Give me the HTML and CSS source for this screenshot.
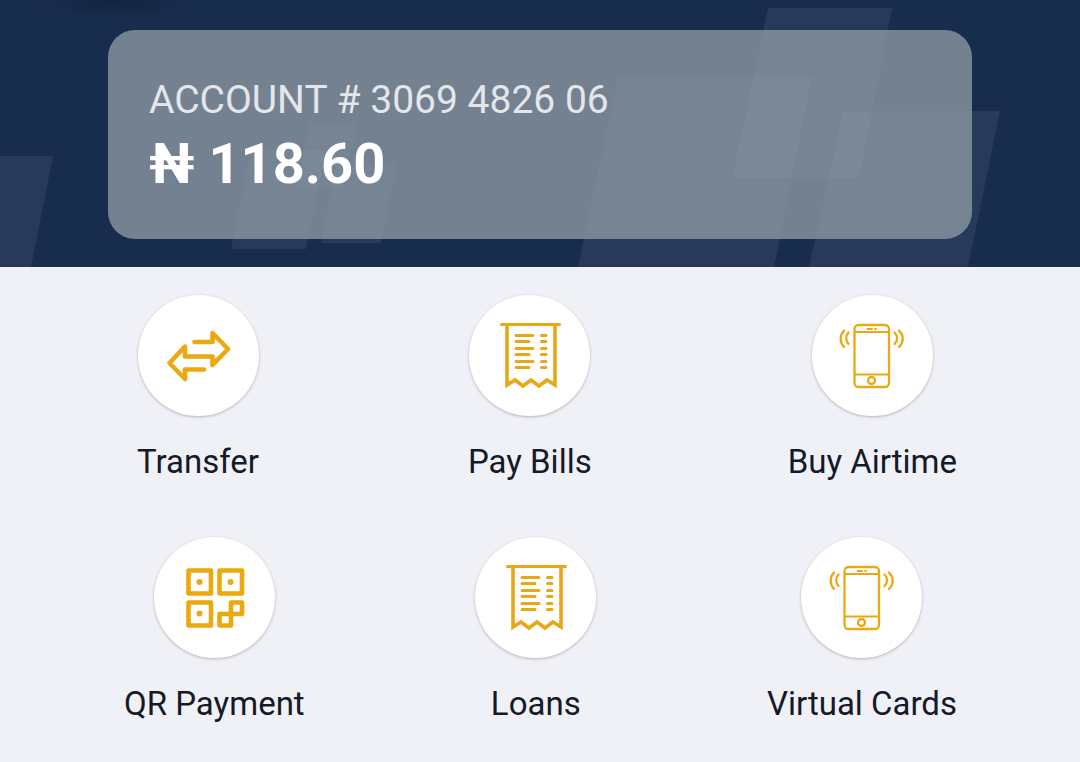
FILE: index.html
```html
<!DOCTYPE html>
<html lang="en">

<head>
    <meta charset="UTF-8">
    <meta name="viewport" content="width=device-width, initial-scale=1.0">
    <title>Account</title>
    <link rel="stylesheet" href="styles.css">
</head>

<body>
    <header class="hero">
        <svg class="hero-shapes" viewBox="0 0 1080 267" preserveAspectRatio="none" aria-hidden="true">
            <polygon points="0,156 53,156 31,267 0,267" />
            <polygon points="310,123 357,123 344,188 297,188" />
            <polygon points="251,150 326,150 306,249 231,249" />
            <polygon points="337,163 397,163 381,243 321,243" />
            <polygon points="618,77 812,77 774,267 578,267" />
            <polygon points="768,8 892,8 859,178 732,178" />
            <polygon points="843,111 1000,111 968,267 809,267" />
        </svg>
        <section class="account-card">
            <p class="account-number">ACCOUNT # 3069 4826 06</p>
            <h1 class="balance">₦ 118.60</h1>
        </section>
    </header>

    <!-- icons used more than once -->
    <svg class="sprite" aria-hidden="true">
        <symbol id="bill" viewBox="0 0 66 68">
            <g fill="none" stroke="#e6a817" stroke-linecap="round">
                <path stroke-width="3" d="M4.500 2.500H62.500" />
                <path stroke-width="3.600" d="M10 3V63L18 58L26 64L34 58L42 64L50 58L58 63V3" />
                <path stroke-width="3" d="M19 13.500H36M19 19.500H32M19 26.500H36M19 32.500H32M19 39.500H36M19 45.500H32M44.500 13.500H49M44.500 19.500H49M44.500 26.500H49M44.500 32.500H49M44.500 39.500H49M44.500 45.500H49" />
            </g>
        </symbol>
        <symbol id="phone" viewBox="0 0 66 68">
            <g fill="none" stroke="#eaa914" stroke-width="2.300" stroke-linecap="round">
                <rect x="15.500" y="3" width="34.500" height="62" rx="4" />
                <path stroke-width="2" d="M16 10H50M16 52.500H50" />
                <path stroke-width="1.800" d="M28.500 7H33M36 7H37" />
                <circle cx="32.500" cy="58.500" r="3.500" />
                <path d="M5 8.500C.5 13.500 .5 20 5 25M9.500 10.500C6.500 14 6.500 18.500 9.500 22M60 8.500C65 13.500 65 20 60 25M55.500 10.500C59 14 59 18.500 55.500 22" />
            </g>
        </symbol>
    </svg>

    <main class="menu">
        <div class="menu-row">
            <button type="button" class="menu-item wide">
                <span class="circle">
                    <svg viewBox="0 0 66 68">
                        <path fill="none" stroke="#e9a90f" stroke-width="4.600" stroke-linecap="round" stroke-linejoin="round" d="M29.500 20H47.500V11L63 27L47.500 43V34.500H20V24.500L4.500 41L20 57V47.500H39" />
                    </svg>
                </span>
                <span class="label">Transfer</span>
            </button>
            <button type="button" class="menu-item">
                <span class="circle"><svg viewBox="0 0 66 68"><use href="#bill" /></svg></span>
                <span class="label">Pay Bills</span>
            </button>
            <button type="button" class="menu-item">
                <span class="circle"><svg viewBox="0 0 66 68"><use href="#phone" /></svg></span>
                <span class="label">Buy Airtime</span>
            </button>
        </div>
        <div class="menu-row">
            <button type="button" class="menu-item">
                <span class="circle">
                    <svg viewBox="0 0 66 68">
                        <g fill="none" stroke="#e9a90f" stroke-width="4.600" stroke-linejoin="round">
                            <rect x="7.500" y="6.500" width="22.500" height="23" />
                            <rect x="38.500" y="6.500" width="22.500" height="23" />
                            <rect x="7.500" y="38.500" width="22.500" height="23" />
                            <rect x="50" y="38.500" width="11" height="11.500" />
                            <rect x="38.500" y="50" width="11.500" height="11.500" />
                        </g>
                        <g fill="#e9a90f">
                            <circle cx="18.500" cy="18" r="3" />
                            <circle cx="49.500" cy="18" r="3" />
                            <circle cx="18.500" cy="49.500" r="3" />
                        </g>
                    </svg>
                </span>
                <span class="label">QR Payment</span>
            </button>
            <button type="button" class="menu-item">
                <span class="circle"><svg viewBox="0 0 66 68"><use href="#bill" /></svg></span>
                <span class="label">Loans</span>
            </button>
            <button type="button" class="menu-item">
                <span class="circle"><svg viewBox="0 0 66 68"><use href="#phone" /></svg></span>
                <span class="label">Virtual Cards</span>
            </button>
        </div>
    </main>
</body>

</html>
```
FILE: styles.css
```css
* {
    box-sizing: border-box;
}

body {
    font-family: Roboto, "Liberation Sans", sans-serif;
    margin: 0;
    background-color: #f0f1f7;
    color: #151a28;
}

.hero {
    position: relative;
    padding: 30px 10% 28px;
    background: radial-gradient(ellipse 76px 18px at 115px 0, #14233f, transparent) #182c4d;
}

.hero-shapes {
    position: absolute;
    top: 0;
    left: 0;
    width: 100%;
    height: 100%;
    fill: rgba(255, 255, 255, 0.07);
}

.account-card {
    position: relative;
    padding: 46px 41px 42px;
    border-radius: 27px;
    background-color: rgba(146, 157, 168, 0.75);
}

.account-number {
    margin: 0;
    font-size: 39px;
    line-height: 48px;
    color: #e3e6ea;
}

.balance {
    margin: 7px 0 0;
    font-size: 56px;
    line-height: 66px;
    font-weight: bold;
    color: white;
}

.sprite {
    display: none;
}

.menu {
    padding: 28px 123px 28px 124px;
}

.menu-row {
    display: flex;
    justify-content: space-between;
    margin-bottom: 55px;
}

.menu-row:last-child {
    margin-bottom: 0;
}

.menu-item {
    display: flex;
    flex-direction: column;
    align-items: center;
    padding: 0;
    border: none;
    background: none;
    font-family: inherit;
    color: inherit;
    cursor: pointer;
}

.menu-item.wide {
    min-width: 148px;
}

.circle {
    display: flex;
    align-items: center;
    justify-content: center;
    width: 121px;
    height: 121px;
    margin-bottom: 26px;
    border-radius: 50%;
    background-color: white;
    box-shadow: 0 1px 3px rgba(0, 0, 0, 0.25);
}

.circle svg {
    width: 66px;
    height: 68px;
}

.label {
    font-size: 33px;
    line-height: 40px;
    white-space: nowrap;
}
```
